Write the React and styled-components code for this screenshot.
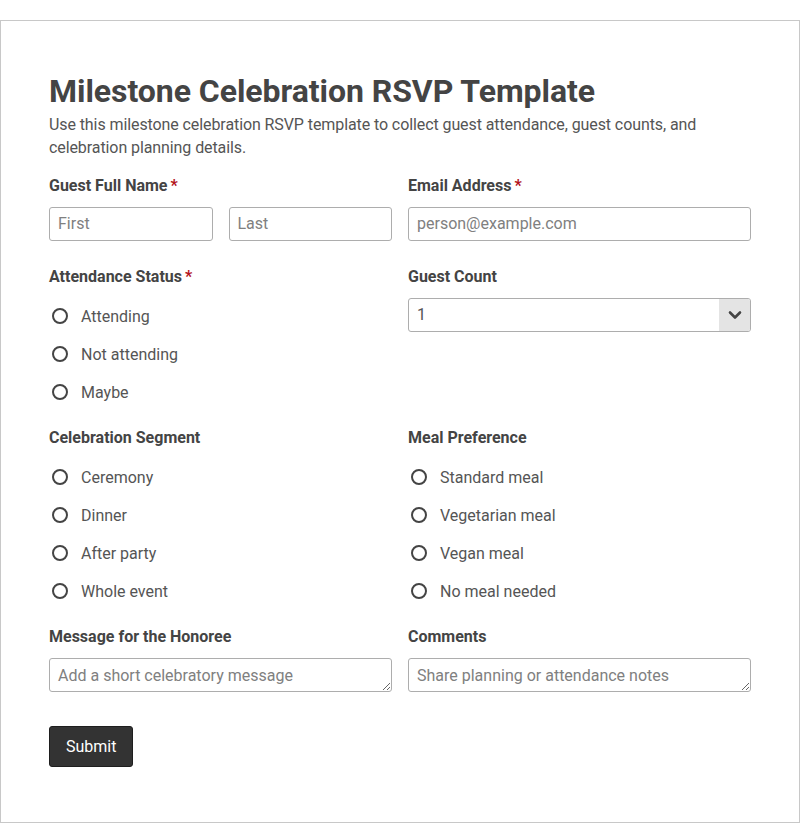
import React from "react";
import styled, { createGlobalStyle } from "styled-components";

const Global = createGlobalStyle`
  html, body { margin: 0; padding: 0; background: #fff; }
  body { font-family: Roboto, "Liberation Sans", Arial, sans-serif; }
  * { box-sizing: border-box; }
`;

const Page = styled.div`
  padding-top: 20px;
`;

const Card = styled.form`
  width: 800px;
  border: 1px solid #c8c8c8;
  padding: 51px 48px 55px 48px;
`;

const Title = styled.h1`
  margin: 0 0 3px;
  font-size: 32px;
  line-height: 38px;
  font-weight: 700;
  color: #444;
  letter-spacing: -0.05px;
`;

const Lead = styled.p`
  margin: 0 0 16px;
  font-size: 16px;
  line-height: 23px;
  color: #555;
  letter-spacing: -0.09px;
`;

const Grid = styled.div`
  display: grid;
  grid-template-columns: 1fr 1fr;
  column-gap: 16px;
  row-gap: 25px;
`;

const Field = styled.div`
  display: flex;
  flex-direction: column;
  min-width: 0;
`;

const Label = styled.div`
  font-size: 16px;
  line-height: 22px;
  font-weight: 700;
  color: #444;
  margin-bottom: 10px;
`;

const Req = styled.span`
  color: #b3121b;
  margin-left: 3px;
`;

const Pair = styled.div`
  display: grid;
  grid-template-columns: 1fr 1fr;
  column-gap: 16px;
`;

const Input = styled.input`
  height: 34px;
  width: 100%;
  border: 1px solid #adadad;
  border-radius: 3px;
  padding: 0 8px 1px;
  font-family: inherit;
  font-size: 16px;
  color: #444;
  outline: none;
  &::placeholder { color: #808080; }
`;

const Area = styled.textarea`
  height: 34px;
  width: 100%;
  border: 1px solid #adadad;
  border-radius: 3px;
  padding: 7px 8px 5px;
  font-family: inherit;
  font-size: 16px;
  line-height: 20px;
  color: #444;
  outline: none;
  resize: vertical;
  display: block;
  &::placeholder { color: #808080; }
`;

const SelectBox = styled.div`
  position: relative;
  height: 34px;
  border: 1px solid #adadad;
  border-radius: 3px;
  display: flex;
  align-items: stretch;
  overflow: hidden;
`;

const SelectValue = styled.div`
  flex: 1;
  display: flex;
  align-items: center;
  padding: 0 8px 1px;
  font-size: 16px;
  color: #555;
`;

const Arrow = styled.div`
  width: 31px;
  background: #e4e4e4;
  display: flex;
  align-items: center;
  justify-content: center;
`;

const Options = styled.div`
  display: flex;
  flex-direction: column;
  gap: 18px;
  padding-top: 8px;
`;

const Option = styled.label`
  display: flex;
  align-items: center;
  height: 20px;
  font-size: 16px;
  color: #555;
`;

const Circle = styled.span`
  width: 16px;
  height: 16px;
  border: 2px solid #444;
  border-radius: 50%;
  margin-left: 3px;
  margin-right: 13px;
  flex: none;
`;

const Submit = styled.button`
  margin-top: 34px;
  height: 41px;
  padding: 0 16px;
  background: #333;
  color: #fff;
  border: 1px solid #1e1e1e;
  border-radius: 3px;
  font-family: inherit;
  font-size: 16px;
`;

const Radios = ({ items }) => (
  <Options>
    {items.map((t) => (
      <Option key={t}>
        <Circle />
        {t}
      </Option>
    ))}
  </Options>
);

export default function App() {
  return (
    <>
      <Global />
      <Page>
        <Card onSubmit={(e) => e.preventDefault()}>
          <Title>Milestone Celebration RSVP Template</Title>
          <Lead>
            Use this milestone celebration RSVP template to collect guest attendance, guest counts, and celebration planning details.
          </Lead>
          <Grid>
            <Field>
              <Label>Guest Full Name<Req>*</Req></Label>
              <Pair>
                <Input placeholder="First" />
                <Input placeholder="Last" />
              </Pair>
            </Field>
            <Field>
              <Label>Email Address<Req>*</Req></Label>
              <Input placeholder="person@example.com" />
            </Field>
            <Field>
              <Label>Attendance Status<Req>*</Req></Label>
              <Radios items={["Attending", "Not attending", "Maybe"]} />
            </Field>
            <Field>
              <Label>Guest Count</Label>
              <SelectBox>
                <SelectValue>1</SelectValue>
                <Arrow>
                  <svg width="14" height="10" viewBox="0 0 14 10">
                    <path d="M2 2.5 L7 7.5 L12 2.5" fill="none" stroke="#444" strokeWidth="2.6" strokeLinecap="round" strokeLinejoin="round" />
                  </svg>
                </Arrow>
              </SelectBox>
            </Field>
            <Field>
              <Label>Celebration Segment</Label>
              <Radios items={["Ceremony", "Dinner", "After party", "Whole event"]} />
            </Field>
            <Field>
              <Label>Meal Preference</Label>
              <Radios items={["Standard meal", "Vegetarian meal", "Vegan meal", "No meal needed"]} />
            </Field>
            <Field>
              <Label>Message for the Honoree</Label>
              <Area rows={1} placeholder="Add a short celebratory message" />
            </Field>
            <Field>
              <Label>Comments</Label>
              <Area rows={1} placeholder="Share planning or attendance notes" />
            </Field>
          </Grid>
          <Submit type="submit">Submit</Submit>
        </Card>
      </Page>
    </>
  );
}
